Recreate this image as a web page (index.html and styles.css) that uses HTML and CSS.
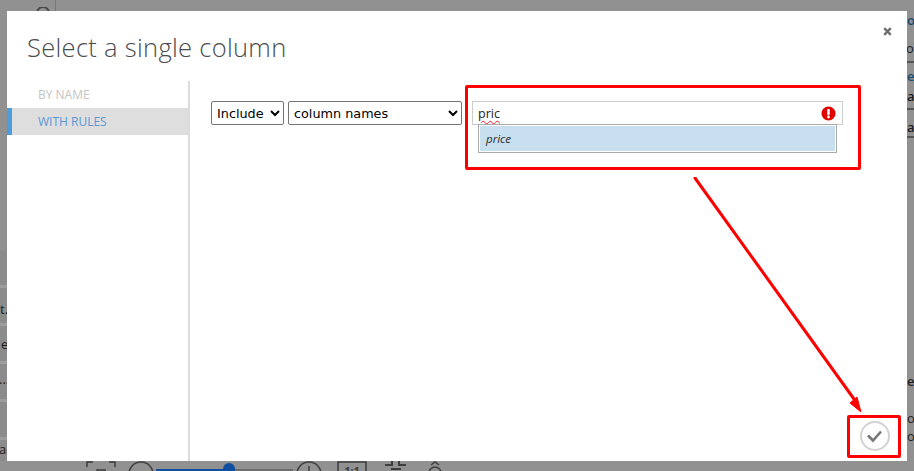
FILE: index.html
```html
<!DOCTYPE html>
<html lang="en">
<head>
<meta charset="utf-8">
<title>Select a single column</title>
<link rel="stylesheet" href="styles.css">
</head>
<body>
<div class="backdrop">
  <div class="bg-search"><svg width="30" height="11" viewBox="0 0 30 11"><circle cx="14" cy="6" r="6" fill="none" stroke="#4a4a4a" stroke-width="2"/></svg></div>
  <div class="bg-left">
    <span class="bg-line l1">t.</span><span class="bg-line l2">e</span><span class="bg-line l3">...</span><span class="bg-line l4">a.</span>
  </div>
  <div class="bg-right">
    <span class="bg-r r1">o</span><span class="bg-r r2">ol</span><span class="bg-r r3">e</span><span class="bg-r r4">ar</span><span class="bg-r r5">ar</span><span class="bg-r r6">el</span><span class="bg-r r7">ou</span><span class="bg-r r8">o</span>
    <i class="bg-rule a"></i><i class="bg-rule b"></i><i class="bg-rule c"></i>
  </div>
  <svg class="bg-toolbar" width="380" height="10" viewBox="0 0 380 10" fill="none" stroke="#3d3d3d" stroke-width="1.5">
    <path d="M7 6V1h6M29 1h6v5M17 9h8v3h-8z"/>
    <circle cx="61" cy="13" r="12"/>
    <path d="M76 9h137" stroke="#6d6d6d" stroke-width="2"/>
    <path d="M76 10.500h73" stroke="#0f4fa0" stroke-width="5"/>
    <circle cx="149" cy="8" r="6" fill="#0f4fa0" stroke="none"/>
    <circle cx="229" cy="13" r="12"/><path d="M229 5v6"/>
    <path d="M258 12V1h28v11"/>
    <text class="one-to-one" x="272" y="14" text-anchor="middle">1:1</text>
    <path d="M312 0v4h-7M319 0v4h7M311 8h10" stroke-width="2"/>
    <path d="M351 4l4-3 4 3M349 12a6 6 0 0 1 12 0"/>
  </svg>
</div>

<main class="modal">
  <button class="close" type="button" aria-label="Close">
    <svg width="9" height="9" viewBox="0 0 9 9"><path d="M1.200 1.200l6.600 6.600M7.800 1.200L1.200 7.800" fill="none" stroke="#6f6f6f" stroke-width="2.400"/></svg>
  </button>
  <h1 class="title">Select a single column</h1>
  <div class="body">
    <nav class="side">
      <div class="tab">BY NAME</div>
      <div class="tab active">WITH RULES</div>
    </nav>
    <section class="content">
      <div class="rule">
        <select class="sel sel-a"><option>Include</option></select>
        <select class="sel sel-b"><option>column names</option></select>
        <div class="combo">
          <div class="field">
            <span class="typed">pric</span>
            <svg class="err" width="15" height="15" viewBox="0 0 15 15"><circle cx="7.500" cy="7.500" r="7" fill="#e00000"/><rect x="6.200" y="3" width="2.600" height="6" rx="1" fill="#fff"/><circle cx="7.500" cy="11" r="1.400" fill="#fff"/></svg>
          </div>
          <div class="suggest"><div class="item">price</div></div>
        </div>
      </div>
    </section>
  </div>
</main>

<svg class="check" width="32" height="32" viewBox="0 0 32 32" fill="none">
  <circle cx="16" cy="16" r="14" stroke="#d2d2d2" stroke-width="2"/>
  <path d="M9 15.500l5 5 8-9" stroke="#777" stroke-width="2.600"/>
</svg>

<div class="mark mark-top"></div>
<div class="mark mark-bottom"></div>
<svg class="arrow" width="200" height="250" viewBox="0 0 200 250" fill="none">
  <path d="M2 1L161 222" stroke="#f00" stroke-width="3" stroke-linecap="round"/>
  <path d="M168 235L157 226L164 220Z" fill="#f00" stroke="#f00" stroke-width="1"/>
</svg>
</body>
</html>
```

FILE: styles.css
```css
html, body {
  margin: 0;
  height: 100%;
  overflow: hidden;
}
body {
  background: #919191;
  font-family: "Open Sans", "Liberation Sans", sans-serif;
}

/* dimmed page behind the dialog */
.backdrop {
  position: absolute;
  inset: 0;
  overflow: hidden;
  color: #1c1c1c;
  font: 13px "Open Sans", sans-serif;
}
.bg-search {
  position: absolute;
  left: 29px;
  top: 0;
  width: 26px;
  height: 32px;
  border-right: 1px solid #777;
}
.bg-search svg { display: block; margin-top: 7px; }
.bg-left {
  position: absolute;
  left: 0;
  top: 250px;
  width: 7px;
  height: 211px;
  background: repeating-linear-gradient(#8b8b8b 0 35px, #9c9c9c 35px 38px);
  overflow: hidden;
}
.bg-line { position: absolute; left: -1px; }
.l1 { top: 50px; left: 0; }
.l2 { top: 85px; left: 1px; }
.l3 { top: 120px; }
.l4 { top: 190px; left: -1px; }
.bg-right {
  position: absolute;
  left: 907px;
  top: 0;
  width: 7px;
  height: 471px;
  overflow: hidden;
}
.bg-r { position: absolute; left: 0; font-weight: 600; }
.r1 { top: 11px; color: #124a6d; }
.r2 { top: 39px; left: -1px; font-weight: 400; }
.r3 { top: 67px; color: #124a6d; }
.r4 { top: 87px; }
.r5 { top: 118px; }
.r6 { top: 372px; }
.r7 { top: 409px; font-weight: 400; }
.r8 { top: 427px; font-weight: 400; }
.bg-rule { position: absolute; left: 0; width: 7px; height: 2px; background: #555; }
.bg-rule.a { top: 61px; }
.bg-rule.b { top: 108px; }
.bg-rule.c { top: 136px; }
.bg-toolbar {
  position: absolute;
  left: 80px;
  top: 461px;
}
.one-to-one {
  fill: #3d3d3d;
  stroke: none;
  font: 700 11px "Open Sans", sans-serif;
}

/* dialog */
.modal {
  position: relative;
  margin: 11px 0 0 7px;
  width: 900px;
  height: 450px;
  background: #fff;
  display: flex;
  flex-direction: column;
}
.close {
  position: absolute;
  right: 15px;
  top: 16px;
  padding: 0;
  border: 0;
  background: none;
  line-height: 0;
}
.title {
  margin: 0;
  padding: 17px 0 0 20px;
  height: 53px;
  box-sizing: content-box;
  font: 300 25.500px/38px "Open Sans", sans-serif;
  color: #4a4d50;
  letter-spacing: .3px;
}
.body {
  flex: 1;
  display: flex;
  min-height: 0;
}
.side {
  width: 181px;
  border-right: 2px solid #dcdcdc;
}
.tab {
  height: 27px;
  padding-left: 31px;
  font: 400 12px/27px "Open Sans", sans-serif;
  color: #c4c4c4;
}
.tab.active {
  background: #dedede;
  color: #5b97d6;
  border-left: 5px solid #4a9ede;
  padding-left: 26px;
}
.content {
  flex: 1;
  padding: 20px 0 0 21px;
}
.rule {
  display: flex;
  align-items: flex-start;
  gap: 4px;
}
.sel {
  height: 24px;
  margin: 0;
  padding: 0 0 0 1px;
  box-sizing: border-box;
  background: #fff;
  border: 1px solid #767676;
  border-radius: 2px;
  color: #000;
  font: 12.800px "DejaVu Sans", sans-serif;
}
.sel-a { width: 73px; }
.sel-b { width: 174px; }
.combo {
  width: 371px;
  margin-left: 6px;
  position: relative;
}
.field {
  height: 24px;
  box-sizing: border-box;
  border: 1px solid #cccccc;
  display: flex;
  align-items: center;
  justify-content: space-between;
  padding: 0 6px 0 5px;
  font: 12.500px "Open Sans", sans-serif;
  color: #222;
}
.typed {
  text-decoration: underline wavy #e02020 1px;
  text-underline-offset: 2px;
}
.suggest {
  position: absolute;
  left: 6px;
  top: 23px;
  width: 359px;
  height: 29px;
  box-sizing: border-box;
  border: 1px solid #aaaaaa;
  padding: 1px;
  background: #fff;
}
.item {
  height: 25px;
  padding-left: 6px;
  background: #c7dfee;
  font: italic 11.500px/25px "Open Sans", sans-serif;
  color: #2c2c2c;
}

/* confirmation button */
.check {
  position: absolute;
  left: 859px;
  top: 420px;
}

/* red annotations drawn on top of the screenshot */
.mark {
  position: absolute;
  box-sizing: border-box;
  border: 3px solid #f00;
  border-radius: 2px;
}
.mark-top { left: 465px; top: 85px; width: 396px; height: 85px; }
.mark-bottom { left: 847px; top: 415px; width: 54px; height: 43px; }
.arrow {
  position: absolute;
  left: 693px;
  top: 177px;
}
```
